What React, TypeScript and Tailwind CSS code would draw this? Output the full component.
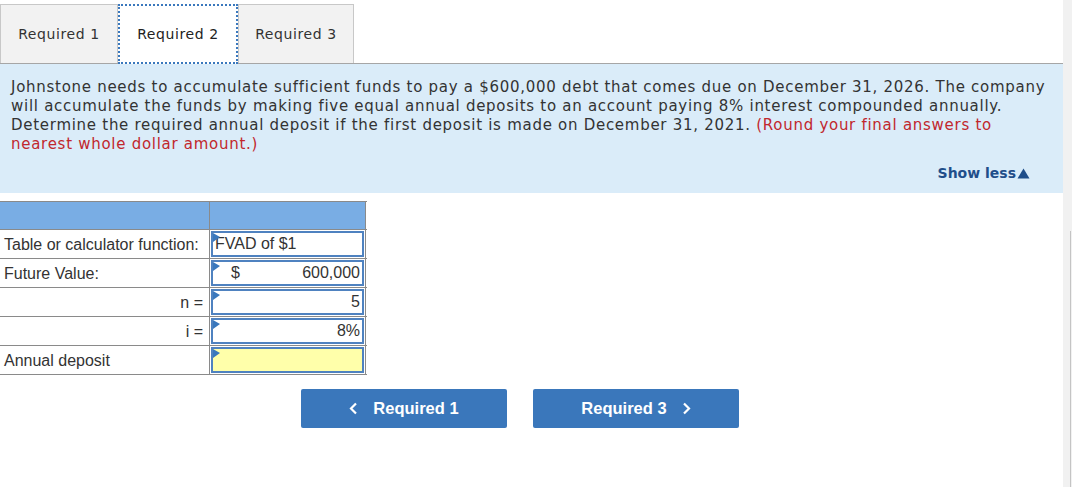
import React from "react";

const Flag = () => (
  <svg className="absolute left-0 top-0" width="7" height="9" viewBox="0 0 7 9">
    <polygon points="0,0 7,4 0,9" fill="#3a78bd" />
  </svg>
);

const Row = ({ label, right, children }: { label: string; right?: boolean; children: React.ReactNode }) => (
  <div className="flex h-[29px] border-b border-[#8a8a8a]">
    <div className={`w-[210px] shrink-0 border-r border-[#8a8a8a] flex items-center px-[4px] pt-[1px] ${right ? "justify-end pr-[6px]" : ""}`}>
      {label}
    </div>
    <div className="w-[156px] shrink-0 border-r border-[#8a8a8a] p-[1px]">{children}</div>
  </div>
);

export default function App() {
  return (
    <div className="relative w-[1072px] h-[487px] bg-white overflow-hidden" style={{ fontFamily: "'DejaVu Sans', Verdana, sans-serif" }}>
      <div className="w-[1063px]">
        {/* tabs */}
        <div className="flex items-end pt-[4px] h-[64px] border-b border-[#a6a6a6]">
          <div className="w-[118px] h-[59px] bg-[#f2f2f2] border border-b-0 border-[#c8c8c8] flex items-center justify-center text-[14px] tracking-[0.6px] text-[#333]">Required 1</div>
          <div className="w-[120px] h-[60px] bg-white border-2 border-dotted border-[#3a78bd] flex items-center justify-center text-[14px] tracking-[0.6px] text-[#222] -mb-[1px]">Required 2</div>
          <div className="w-[116px] h-[59px] bg-[#f2f2f2] border border-b-0 border-[#c8c8c8] flex items-center justify-center text-[14px] tracking-[0.6px] text-[#333]">Required 3</div>
        </div>
        {/* question panel */}
        <div className="bg-[#daecf9] h-[129px] pl-[11px] pr-[14px] pt-[14px] relative">
          <p className="text-[15px] leading-[19px] tracking-[0.72px] text-[#333]">
            Johnstone needs to accumulate sufficient funds to pay a $600,000 debt that comes due on December 31, 2026. The company will accumulate the funds by making five equal annual deposits to an account paying 8% interest compounded annually. Determine the required annual deposit if the first deposit is made on December 31, 2021.{" "}
            <span className="text-[#c1272d]">(Round your final answers to nearest whole dollar amount.)</span>
          </p>
          <div className="absolute right-[33px] bottom-[9px] text-[14px] font-bold text-[#1f4e8a] flex items-center">
            Show less
            <svg className="ml-[1px]" width="13" height="11" viewBox="0 0 13 11"><polygon points="6.5,0.5 12.5,10.5 0.5,10.5" fill="#1f4e8a" /></svg>
          </div>
        </div>
      </div>
      {/* scrollbar */}
      <div className="absolute right-0 top-0 w-[9px] h-full bg-[#f1f1f1]">
        <div className="absolute right-[1px] top-[231px] w-[1px] h-[256px] bg-[#c4c4c4]" />
      </div>

      {/* table */}
      <div className="mt-[8px] w-[367px] text-[16px] text-[#333]" style={{ fontFamily: "'Liberation Sans', Arial, sans-serif" }}>
        <div className="flex h-[29px] border-t border-b border-[#8a8a8a]">
          <div className="w-[210px] bg-[#79ade4] border-r border-[#8a8a8a]" />
          <div className="w-[156px] bg-[#79ade4] border-r border-[#8a8a8a]" />
        </div>
        <Row label="Table or calculator function:">
          <div className="relative h-full border-2 border-[#4f82c0] bg-white flex items-center pl-[2px]">
            <Flag />
            FVAD of $1
          </div>
        </Row>
        <Row label="Future Value:">
          <div className="relative h-full border-2 border-[#4f82c0] bg-white flex items-center justify-between pl-[18px] pr-[2px]">
            <Flag />
            <span>$</span>
            <span>600,000</span>
          </div>
        </Row>
        <Row label="n =" right>
          <div className="relative h-full border-2 border-[#4f82c0] bg-white flex items-center justify-end pr-[2px]">
            <Flag />
            5
          </div>
        </Row>
        <Row label="i =" right>
          <div className="relative h-full border-2 border-[#4f82c0] bg-white flex items-center justify-end pr-[2px]">
            <Flag />
            8%
          </div>
        </Row>
        <Row label="Annual deposit">
          <div className="relative h-full border-2 border-[#4f82c0] bg-[#ffffaa]">
            <Flag />
          </div>
        </Row>
      </div>

      {/* nav buttons */}
      <div className="flex gap-[26px] ml-[301px] mt-[14px]" style={{ fontFamily: "'Liberation Sans', Arial, sans-serif" }}>
        <div className="w-[206px] h-[39px] rounded-[2px] bg-[#3a77bb] text-white font-bold text-[16.5px] flex items-center justify-center gap-[15px]">
          <svg width="9" height="13" viewBox="0 0 9 13"><polyline points="7,1.5 2,6.5 7,11.5" fill="none" stroke="white" strokeWidth="2.2" /></svg>
          <span>Required 1</span>
        </div>
        <div className="w-[206px] h-[39px] rounded-[2px] bg-[#3a77bb] text-white font-bold text-[16.5px] flex items-center justify-center gap-[15px]">
          <span>Required 3</span>
          <svg width="9" height="13" viewBox="0 0 9 13"><polyline points="2,1.5 7,6.5 2,11.5" fill="none" stroke="white" strokeWidth="2.2" /></svg>
        </div>
      </div>
    </div>
  );
}
